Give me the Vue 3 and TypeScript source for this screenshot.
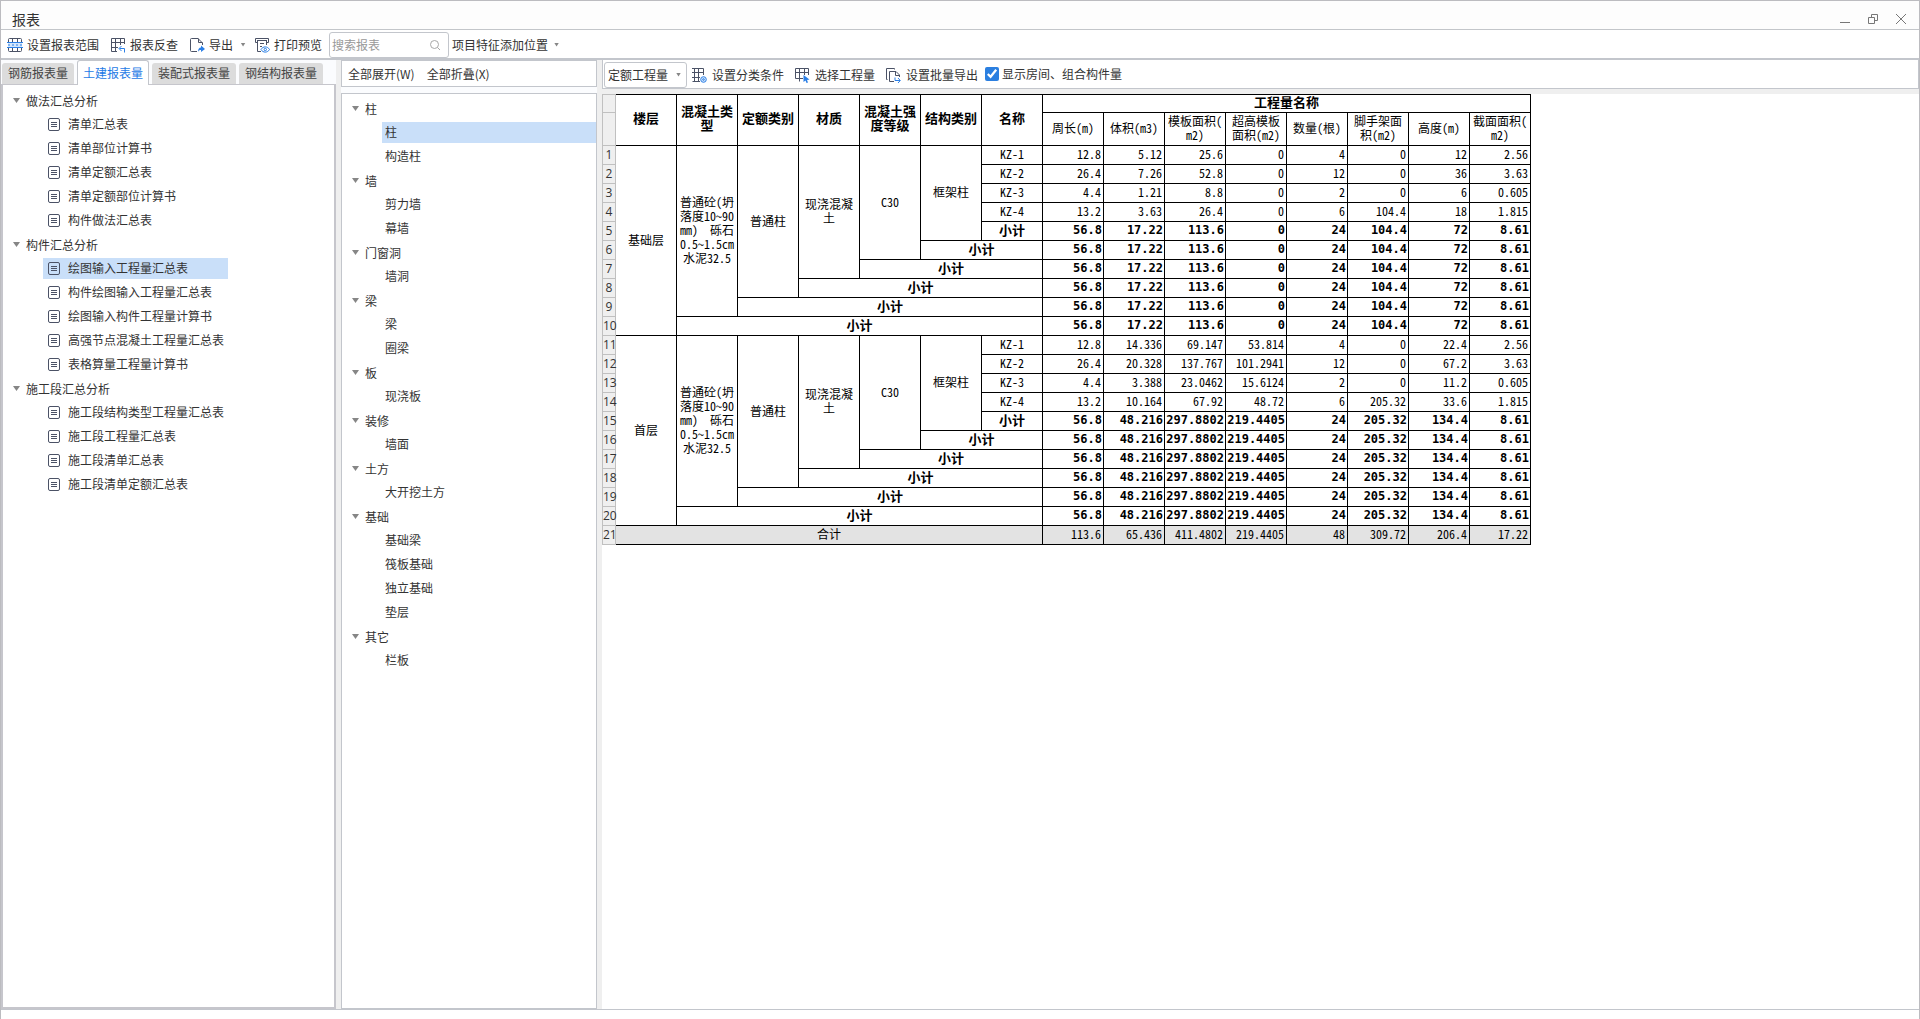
<script setup lang="ts">
import { ref } from 'vue'

interface Group { name: string; children: string[] }

const tabs = ['钢筋报表量', '土建报表量', '装配式报表量', '钢结构报表量']
const activeTab = ref('土建报表量')
const keyword = ref('')
const quantity = ref('定额工程量')
const showRooms = ref(true)

const reports: Group[] = [
  { name: '做法汇总分析', children: ['清单汇总表', '清单部位计算书', '清单定额汇总表', '清单定额部位计算书', '构件做法汇总表'] },
  { name: '构件汇总分析', children: ['绘图输入工程量汇总表', '构件绘图输入工程量汇总表', '绘图输入构件工程量计算书', '高强节点混凝土工程量汇总表', '表格算量工程量计算书'] },
  { name: '施工段汇总分析', children: ['施工段结构类型工程量汇总表', '施工段工程量汇总表', '施工段清单汇总表', '施工段清单定额汇总表'] },
]
const activeReport = ref('绘图输入工程量汇总表')

const components: Group[] = [
  { name: '柱', children: ['柱', '构造柱'] },
  { name: '墙', children: ['剪力墙', '幕墙'] },
  { name: '门窗洞', children: ['墙洞'] },
  { name: '梁', children: ['梁', '圈梁'] },
  { name: '板', children: ['现浇板'] },
  { name: '装修', children: ['墙面'] },
  { name: '土方', children: ['大开挖土方'] },
  { name: '基础', children: ['基础梁', '筏板基础', '独立基础', '垫层'] },
  { name: '其它', children: ['栏板'] },
]
const activeComponent = ref('柱')

const classHeads = ['楼层', '混凝土类\n型', '定额类别', '材质', '混凝土强\n度等级', '结构类别', '名称']
const valueHeads = ['周长(m)', '体积(m3)', '模板面积(\nm2)', '超高模板\n面积(m2)', '数量(根)', '脚手架面\n积(m2)', '高度(m)', '截面面积(\nm2)']

interface Cell { text: string; rows: number; cols: number }
interface Row { no: number; bold: boolean; total: boolean; cells: Cell[]; values: string[] }

const floors = [
  {
    name: '基础层',
    items: [
      ['12.8', '5.12', '25.6', '0', '4', '0', '12', '2.56'],
      ['26.4', '7.26', '52.8', '0', '12', '0', '36', '3.63'],
      ['4.4', '1.21', '8.8', '0', '2', '0', '6', '0.605'],
      ['13.2', '3.63', '26.4', '0', '6', '104.4', '18', '1.815'],
    ],
    sum: ['56.8', '17.22', '113.6', '0', '24', '104.4', '72', '8.61'],
  },
  {
    name: '首层',
    items: [
      ['12.8', '14.336', '69.147', '53.814', '4', '0', '22.4', '2.56'],
      ['26.4', '20.328', '137.767', '101.2941', '12', '0', '67.2', '3.63'],
      ['4.4', '3.388', '23.0462', '15.6124', '2', '0', '11.2', '0.605'],
      ['13.2', '10.164', '67.92', '48.72', '6', '205.32', '33.6', '1.815'],
    ],
    sum: ['56.8', '48.216', '297.8802', '219.4405', '24', '205.32', '134.4', '8.61'],
  },
]
const concrete = '普通砼(坍\n落度10~90\nmm)  砾石\n0.5~1.5cm\n水泥32.5'

const rows: Row[] = []
for (const floor of floors) {
  floor.items.forEach((values, i) => {
    const cells: Cell[] = []
    if (i === 0) {
      const labels = [floor.name, concrete, '普通柱', '现浇混凝\n土', 'C30', '框架柱']
      labels.forEach((text, k) => cells.push({ text, rows: 10 - k, cols: 1 }))
    }
    cells.push({ text: `KZ-${i + 1}`, rows: 1, cols: 1 })
    rows.push({ no: rows.length + 1, bold: false, total: false, cells, values })
  })
  for (let span = 1; span <= 6; span++) {
    rows.push({ no: rows.length + 1, bold: true, total: false, cells: [{ text: '小计', rows: 1, cols: span }], values: floor.sum })
  }
}
rows.push({
  no: rows.length + 1, bold: false, total: true,
  cells: [{ text: '合计', rows: 1, cols: 7 }],
  values: ['113.6', '65.436', '411.4802', '219.4405', '48', '309.72', '206.4', '17.22'],
})
</script>

<template>
  <div class="window">
    <header class="titlebar">
      <h1>报表</h1>
      <div class="controls">
        <button type="button" aria-label="最小化"><svg width="12" height="12" viewBox="0 0 12 12"><path d="M1 9.500h10" /></svg></button>
        <button type="button" aria-label="还原"><svg width="12" height="12" viewBox="0 0 12 12"><path d="M1.500 4.500h6v6h-6zM4.500 4.500v-3h6v6h-3" /></svg></button>
        <button type="button" aria-label="关闭"><svg width="12" height="12" viewBox="0 0 12 12"><path d="M1 1l10 10M11 1L1 11" /></svg></button>
      </div>
    </header>

    <div class="toolbar">
      <button type="button" class="tool">
        <svg class="icon" viewBox="0 0 16 16">
          <rect class="tint" x="1" y="5" width="14" height="6" />
          <path d="M1.500 5V2.500q0-1 1-1h11q1 0 1 1V5M5.500 1.500V5M10.500 1.500V5M1.500 11v2.500q0 1 1 1h11q1 0 1-1V11M5.500 11v3.500M10.500 11v3.500" />
          <path class="blue" d="M0 5.500h16M0 10.500h16M1 8h2M5 8h2M9 8h2M13 8h2" />
        </svg>设置报表范围
      </button>
      <button type="button" class="tool">
        <svg class="icon" viewBox="0 0 16 16">
          <path d="M14.500 7V1.500h-13v13H7M1.500 5.500h13M1.500 10.500H8M5.500 1.500v13M10.500 1.500V8" />
          <path class="blue" d="M14.500 15.500v-4H9.500M11.500 9l-2.500 2.500 2.500 2.500" />
        </svg>报表反查
      </button>
      <button type="button" class="tool export">
        <svg class="icon" viewBox="0 0 16 16">
          <path d="M8 14.500H2.500q-1 0-1-1v-11q0-1 1-1H9L13.500 6v2M9.500 1.500V5.500h4" />
          <path class="bluefill" d="M9 15c0-3 1-4.500 3-4.500V8.500l4 3.500-4 3v-2c-1.500 0-2.500.5-3 2z" />
        </svg>导出
      </button>
      <button type="button" class="caret-btn" aria-label="导出选项"><span class="caret" /></button>
      <button type="button" class="tool print">
        <svg class="icon" viewBox="0 0 16 16">
          <path d="M3.500 5.500h-2v-4h13v4h-2M3.500 3.500v11H7M3 3.500h10M12.500 3.500V8M6 6.500h4M6 9.500h2" />
          <path class="blue" d="M7 12.500c2-3.500 6.500-3.500 8.500 0-2 3.500-6.500 3.500-8.500 0z" /><circle class="blue" cx="11.300" cy="12.500" r="1.200" />
        </svg>打印预览
      </button>
      <label class="search">
        <input v-model="keyword" type="text" placeholder="搜索报表" aria-label="搜索报表">
        <svg width="12" height="12" viewBox="0 0 12 12"><circle cx="5.500" cy="5.500" r="4" /><path d="M8.500 8.500l2.500 2.500" /></svg>
      </label>
      <button type="button" class="tool feature">项目特征添加位置<span class="caret" /></button>
    </div>

    <main class="body">
      <section class="reports">
        <nav class="tabs">
          <button v-for="t in tabs" :key="t" type="button" :class="{ active: t === activeTab }" @click="activeTab = t">{{ t }}</button>
        </nav>
        <ul class="tree report-tree">
          <li v-for="g in reports" :key="g.name">
            <button type="button" class="group"><span class="caret" />{{ g.name }}</button>
            <ul>
              <li v-for="c in g.children" :key="c">
                <button type="button" class="leaf" :class="{ selected: c === activeReport }" @click="activeReport = c">
                  <svg width="12" height="13" viewBox="0 0 12 13"><rect x=".5" y=".5" width="11" height="12" rx="1.500" /><path d="M3 4.500h6M3 6.500h6M3 8.500h6" /></svg>{{ c }}
                </button>
              </li>
            </ul>
          </li>
        </ul>
      </section>

      <section class="components">
        <div class="expand">
          <button type="button">全部展开(W)</button>
          <button type="button">全部折叠(X)</button>
        </div>
        <ul class="tree component-tree">
          <li v-for="g in components" :key="g.name">
            <button type="button" class="group"><span class="caret" />{{ g.name }}</button>
            <ul>
              <li v-for="c in g.children" :key="c">
                <button type="button" class="leaf" :class="{ selected: c === activeComponent }" @click="activeComponent = c">{{ c }}</button>
              </li>
            </ul>
          </li>
        </ul>
      </section>

      <section class="content">
        <div class="subbar">
          <div class="picker">
            <select v-model="quantity" aria-label="工程量类型"><option>定额工程量</option></select>
            <span class="caret" />
          </div>
          <button type="button" class="tool">
            <svg class="icon" viewBox="0 0 16 16">
              <path d="M9 14.500H1.500M3.500 14.500v-13h9V8M7.500 1.500v13M1 1.500h3M1 5.500h11M1 10.500h8" />
              <circle class="blue tint" cx="12.500" cy="12.500" r="2.800" /><circle class="blue" cx="12.500" cy="12.500" r=".8" />
            </svg>设置分类条件
          </button>
          <button type="button" class="tool">
            <svg class="icon" viewBox="0 0 16 16">
              <path d="M14.500 8V1.500h-13v10H9M1.500 5.500h13M5.500 1.500v13M10.500 1.500V8" />
              <path class="bluefill" d="M9.500 8l6 4.500-2.500.5 1 2.500-1.500.5-1-2.500-2 1.500z" />
            </svg>选择工程量
          </button>
          <button type="button" class="tool batch">
            <svg class="icon" viewBox="0 0 16 16">
              <path d="M2.500 12.500h-1v-11h8v1M9 14.500H4.500v-10H11l3.500 3.500v2M10.500 4.500v4h4" />
              <path class="blue" d="M10 10.500v3h5M13 11l2.300 2.500L13 16" />
            </svg>设置批量导出
          </button>
          <label class="check"><input v-model="showRooms" type="checkbox">显示房间、组合构件量</label>
        </div>

        <div class="sheet">
          <table>
            <colgroup><col class="no"><col v-for="n in 15" :key="n" class="data"></colgroup>
            <thead>
              <tr class="first">
                <td class="rowno" />
                <th v-for="h in classHeads" :key="h" class="tall" rowspan="2" scope="col">{{ h }}</th>
                <th colspan="8" scope="colgroup">工程量名称</th>
              </tr>
              <tr class="second">
                <td class="rowno" />
                <th v-for="h in valueHeads" :key="h" class="plain" scope="col">{{ h }}</th>
              </tr>
            </thead>
            <tbody>
              <tr v-for="r in rows" :key="r.no" :class="{ bold: r.bold, total: r.total }">
                <th class="rowno" scope="row">{{ r.no }}</th>
                <td v-for="(c, i) in r.cells" :key="i" :rowspan="c.rows" :colspan="c.cols">{{ c.text }}</td>
                <td v-for="(v, i) in r.values" :key="'v' + i" class="num">{{ v }}</td>
              </tr>
            </tbody>
          </table>
        </div>
      </section>
    </main>
    <footer class="status" />
  </div>
</template>

<style>
body { margin: 0; background: #fff; }
</style>

<style scoped>
* { box-sizing: border-box; }
.window {
  min-height: 100vh;
  display: flex;
  flex-direction: column;
  border: 1px solid #bcbcc0;
  border-bottom: 0;
  background: #fff;
  color: #333;
  font: 12px/16px "Noto Sans CJK SC", sans-serif;
}
button, input, select { font: inherit; color: inherit; }
button { border: 0; padding: 0; background: none; white-space: nowrap; }
ul { list-style: none; margin: 0; padding: 0; }
svg { flex: none; fill: none; stroke: #4b5266; }
.caret { flex: none; width: 7px; height: 5px; background: #868686; clip-path: polygon(0 0, 100% 0, 50% 100%); }

.titlebar {
  height: 29px;
  display: flex;
  align-items: center;
  justify-content: space-between;
  padding: 8px 12px 0 11px;
  border-bottom: 1px solid #c3c6ca;
  background: #fdfdfd;
}
h1 { margin: 0; font-size: 14px; font-weight: 400; line-height: 20px; }
.controls { display: flex; gap: 16px; }
.controls button { display: flex; }
.controls svg { stroke: #777; }

.toolbar {
  height: 30px;
  display: flex;
  align-items: center;
  padding: 1px 0 0 6px;
  border-bottom: 2px solid #c3c6cc;
}
.tool { display: flex; align-items: center; gap: 4px; margin-right: 11px; }
.icon { width: 16px; height: 16px; }
.blue { stroke: #2b7fe6; }
.tint { fill: #d3e6fb; stroke: none; }
.blue.tint { stroke: #2b7fe6; }
.bluefill { fill: #2b7fe6; stroke: none; }
.export { margin-right: 5px; }
.caret-btn { width: 10px; height: 16px; margin-right: 6px; display: flex; align-items: center; justify-content: center; }
.toolbar .caret, .picker .caret { width: 5px; height: 4px; }
.print { margin-right: 7px; }
.search {
  width: 120px;
  height: 26px;
  display: flex;
  align-items: center;
  margin-right: 3px;
  padding: 0 7px 0 2px;
  border: 1px solid #c3c6cc;
  border-radius: 3px;
}
.search input { flex: 1; min-width: 0; border: 0; padding: 0; outline: 0; background: none; }
.search input::placeholder { color: #999; opacity: 1; }
.search svg { stroke: #a8a8a8; }
.feature { gap: 6px; }

.body { flex: 1; display: flex; gap: 5px; background: #efefef; }
.reports { width: 335px; display: flex; flex-direction: column; background: #fbfcfe; }
.tabs { height: 24px; display: flex; align-items: flex-end; gap: 3px; padding-left: 1px; }
.tabs button { height: 21px; padding: 0 6px 2px; border-radius: 3px 3px 0 0; background: #dcdcdc; color: #444; }
.tabs button.active {
  height: 25px;
  margin-bottom: -1px;
  padding: 0 5px;
  border: 1px solid #c3c6cc;
  border-bottom: 0;
  background: #fff;
  color: #1e7be6;
  z-index: 1;
}
.tree { flex: 1; background: #fff; }
.group { height: 24px; display: flex; align-items: center; gap: 6px; padding: 0 0 1px 10px; }
.leaf { width: 100%; height: 21px; display: flex; align-items: center; margin: 1px 0 2px; padding: 0 0 1px; }
.tree ul li { height: 24px; overflow: hidden; }
.selected { background: #c9dff9; }
.report-tree { padding-top: 4px; border: 2px solid #c6c6cc; border-top-width: 1px; }
.report-tree ul { width: fit-content; margin-left: 40px; }
.report-tree .leaf { gap: 8px; padding: 0 4px 1px 5px; }

.components { width: 256px; display: flex; flex-direction: column; gap: 6px; background: #fbfcfe; }
.expand { height: 27px; display: flex; align-items: center; gap: 12px; padding-left: 6px; border: 1px solid #c3c6cc; background: #fff; }
.component-tree { padding-top: 3px; border: 1px solid #c3c6cc; }
.component-tree ul { margin-left: 40px; }
.component-tree .leaf { padding-left: 3px; }

.content { flex: 1; min-width: 0; display: flex; flex-direction: column; gap: 5px; }
.subbar { height: 29px; display: flex; align-items: center; padding: 1px 0 0 1px; border: 1px solid #c3c6cc; border-top: 0; background: #fff; }
.picker { position: relative; width: 83px; height: 26px; margin-right: 4px; }
.picker select { appearance: none; width: 100%; height: 100%; padding: 0 3px; border: 1px solid #c3c6cc; border-radius: 3px; background: #fff; }
.picker .caret { position: absolute; right: 6px; top: 11px; pointer-events: none; }
.subbar .tool { gap: 5px; margin-right: 10px; padding-top: 1px; }
.subbar .batch { margin-right: 7px; }
.check { display: flex; align-items: center; gap: 3px; padding-bottom: 2px; }
.check input { width: 14px; height: 14px; margin: 0; accent-color: #2b7fe0; }

.sheet { flex: 1; background: #fff; }
table {
  width: 929px;
  table-layout: fixed;
  border-collapse: separate;
  border-spacing: 0;
  color: #000;
  font: 12px/14px "Noto Sans Mono CJK SC", "Liberation Mono", "Noto Sans CJK SC", monospace;
}
col.no { width: 14px; }
col.data { width: 61px; }
td, th {
  height: 19px;
  padding: 0 0 2px;
  border: solid #000;
  border-width: 0 1px 1px 0;
  text-align: center;
  vertical-align: middle;
  white-space: pre;
  font-weight: 400;
}
.first > * { border-top-width: 1px; }
.second > * { height: 33px; }
thead th { padding-bottom: 3px; font-size: 13px; font-weight: 700; }
thead th.tall { padding-bottom: 5px; }
thead th.plain { font-size: 12px; font-weight: 400; }
.rowno { padding-bottom: 1px; border-color: #c0c0c0; border-left-width: 1px; background: #efefef; color: #333; font-family: "Open Sans", sans-serif; }
.bold td { font-size: 13px; font-weight: 700; }
td.num { text-align: right; padding-right: 2px; }
.bold td.num { padding-right: 1px; font-family: "DejaVu Sans Mono", monospace; font-size: 12px; }
.total td { background: #e3e3e3; }

.status { height: 10px; border-top: 1px solid #c3c6cc; }
</style>
